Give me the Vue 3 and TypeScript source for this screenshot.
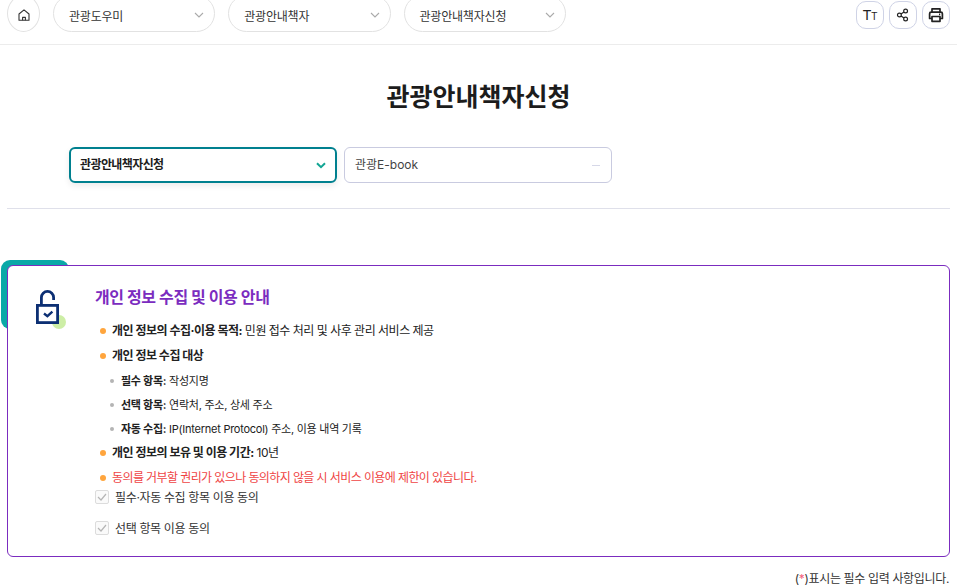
<script setup lang="ts">
interface Row { lead?: string; text?: string; sub?: boolean; warn?: boolean }
const pills: string[] = ['관광도우미', '관광안내책자', '관광안내책자신청']
const rows: Row[] = [
  { lead: '개인 정보의 수집·이용 목적:', text: ' 민원 접수 처리 및 사후 관리 서비스 제공' },
  { lead: '개인 정보 수집 대상' },
  { lead: '필수 항목:', text: ' 작성지명', sub: true },
  { lead: '선택 항목:', text: ' 연락처, 주소, 상세 주소', sub: true },
  { lead: '자동 수집:', text: ' IP(Internet Protocol) 주소, 이용 내역 기록', sub: true },
  { lead: '개인 정보의 보유 및 이용 기간:', text: ' 10년' },
  { text: '동의를 거부할 권리가 있으나 동의하지 않을 시 서비스 이용에 제한이 있습니다.', warn: true },
]
const checks: string[] = ['필수·자동 수집 항목 이용 동의', '선택 항목 이용 동의']
</script>

<template>
  <div class="page">
    <header class="topbar">
      <div class="crumbs">
        <button class="home" aria-label="홈">
          <svg width="14" height="14" viewBox="0 0 14 14" fill="none" stroke="#333" stroke-width="1.1" stroke-linejoin="round">
            <path d="M2 6 7 1.8 12 6v6.2H2z" />
            <path d="M5.6 12.2V9.4h2.8v2.8" />
          </svg>
        </button>
        <div v-for="p in pills" :key="p" class="pill">
          <span>{{ p }}</span>
          <svg width="10" height="6" viewBox="0 0 10 6" fill="none" stroke="#aaa" stroke-width="1.1"><path d="M1 1l4 4 4-4" /></svg>
        </div>
      </div>
      <div class="tools">
        <button class="tool" aria-label="글자 크기">
          <span class="tt-big">T</span><span class="tt-small">T</span>
        </button>
        <button class="tool" aria-label="공유">
          <svg width="14" height="14" viewBox="0 0 14 14" fill="none" stroke="#222" stroke-width="1.2">
            <circle cx="9.6" cy="3" r="1.9" /><circle cx="3.4" cy="7" r="1.9" /><circle cx="9.6" cy="11" r="1.9" />
            <path d="M5 6 8 4M5 8l3 2" />
          </svg>
        </button>
        <button class="tool" aria-label="인쇄">
          <svg width="16" height="16" viewBox="0 0 16 16" fill="none" stroke="#222" stroke-width="1.7" stroke-linejoin="round">
            <path d="M4 5V1.8h8V5" />
            <path d="M4 11.5H1.6V6.8A1.6 1.6 0 0 1 3.2 5.2h9.6a1.6 1.6 0 0 1 1.6 1.6v4.7H12" />
            <path d="M4 9.5h8v4.8H4z" />
            <path d="M11 7.4h1.2" />
          </svg>
        </button>
      </div>
    </header>

    <h1 class="title">관광안내책자신청</h1>

    <div class="selects">
      <div class="select active">
        <span>관광안내책자신청</span>
        <svg class="nudge" width="10" height="7" viewBox="0 0 10 7" fill="none" stroke="#12a594" stroke-width="2"><path d="M1 1.2l4 4 4-4" /></svg>
      </div>
      <div class="select">
        <span>관광E-book</span>
        <i class="dash nudge"></i>
      </div>
    </div>

    <hr class="rule" />

    <section class="card-wrap">
      <div class="tab"></div>
      <div class="card">
        <div class="icon">
          <i class="dot"></i>
          <svg width="26" height="36" viewBox="0 0 26 36" fill="none" stroke="#0c2f73" stroke-width="2.8">
            <path d="M6.4 14V7.5a6.1 6.1 0 0 1 12.2 0v2.5" />
            <rect x="2.4" y="15.4" width="20.2" height="17.2" fill="#fff" />
            <path d="M9 23.5l3.4 2.6 5-4.5" stroke-width="2.4" />
          </svg>
        </div>
        <div class="body">
          <h2 class="heading">개인 정보 수집 및 이용 안내</h2>
          <ul class="list">
            <li v-for="(r, i) in rows" :key="i" class="row" :class="{ sub: r.sub, warn: r.warn }">
              <b v-if="r.lead">{{ r.lead }}</b><span v-if="r.text">{{ r.text }}</span>
            </li>
          </ul>
          <label v-for="c in checks" :key="c" class="check">
            <span class="box">
              <svg width="10" height="8" viewBox="0 0 10 8" fill="none" stroke="#b5b5b5" stroke-width="1.2"><path d="M1 4l3 3 5-6" /></svg>
            </span>
            <span>{{ c }}</span>
          </label>
        </div>
      </div>
    </section>

    <p class="note">(<em>*</em>)표시는 필수 입력 사항입니다.</p>
  </div>
</template>

<style>
html, body { margin: 0; overflow: hidden; background: #fff; }
</style>

<style scoped>
.page {
  width: 957px;
  height: 586px;
  overflow: hidden;
  font-family: "Inter", "Noto Sans CJK KR", sans-serif;
  color: #222;
  font-size: 12px;
}
.topbar {
  height: 45px;
  box-sizing: border-box;
  border-bottom: 1px solid #ececec;
  display: flex;
  justify-content: space-between;
  padding: 0 7px;
}
.crumbs { display: flex; gap: 13px; margin-top: -5px; height: 37px; }
.home {
  width: 33px;
  height: 37px;
  box-sizing: border-box;
  border: 1px solid #e2e2e2;
  border-radius: 50%;
  background: #fff;
  padding: 3px 0 0;
  display: flex;
  align-items: center;
  justify-content: center;
}
.pill {
  width: 162.25px;
  box-sizing: border-box;
  height: 37px;
  border: 1px solid #e2e2e2;
  border-radius: 19px;
  padding: 3px 10px 0 15px;
  display: flex;
  align-items: center;
  justify-content: space-between;
  color: #333;
  font-size: 12px;
  letter-spacing: -0.2px;
}
.tools { display: flex; gap: 5px; margin-top: 1px; height: 28px; }
.tool {
  width: 28px;
  height: 28px;
  box-sizing: border-box;
  border: 1px solid #cfd3e6;
  border-radius: 10px;
  background: #fff;
  padding: 0;
  display: flex;
  align-items: center;
  justify-content: center;
  font-family: "Liberation Sans", sans-serif;
  color: #222;
}
.tt-big { font-size: 14px; }
.tt-small { font-size: 10px; margin-top: 2px; }
.title {
  margin: 34px 0 0;
  text-align: center;
  font-size: 25px;
  line-height: 36px;
  font-weight: 700;
  color: #1c1c1c;
}
.selects { display: flex; gap: 7px; margin: 32px 0 0 69px; }
.select {
  width: 268px;
  height: 36px;
  box-sizing: border-box;
  border: 1px solid #c9cbe0;
  border-radius: 6px;
  padding: 0 11px 3px 10px;
  display: flex;
  align-items: center;
  justify-content: space-between;
  font-size: 12px;
  color: #444;
}
.select.active {
  border: 2px solid #00808f;
  padding: 0 9px 3px 9px;
  color: #1c1c1c;
  font-weight: 700;
  letter-spacing: -0.6px;
  box-shadow: 0 3px 6px rgba(0, 0, 0, 0.08);
}
.nudge { margin-top: 3px; }
.dash { width: 8px; height: 1px; background: #d6d8e8; }
.rule { margin: 25px 7px 0; border: 0; border-top: 1px solid #dfe0ea; }
.card-wrap { position: relative; margin: 51px 7px 0; padding-top: 5px; }
.tab {
  position: absolute;
  left: -6px;
  top: 0;
  width: 68px;
  height: 69px;
  border-radius: 9px;
  background: #0aa8a7;
}
.card {
  position: relative;
  height: 292px;
  box-sizing: border-box;
  border: 1px solid #7b2cbf;
  border-radius: 6px;
  background: #fff;
  display: flex;
}
.icon { position: relative; width: 87px; padding: 24px 0 0 27px; box-sizing: border-box; }
.dot {
  position: absolute;
  left: 44px;
  top: 49px;
  width: 14px;
  height: 14px;
  border-radius: 50%;
  background: #cdeea6;
}
.icon svg { position: relative; display: block; }
.body { flex: 1; padding-top: 20px; }
.heading {
  margin: 0 0 11px;
  font-size: 16px;
  line-height: 22px;
  font-weight: 700;
  color: #7b2cbf;
  letter-spacing: -0.4px;
}
.list { margin: 0; padding: 0; list-style: none; }
.row {
  position: relative;
  height: 25px;
  line-height: 24px;
  padding-left: 17px;
  font-size: 12px;
  letter-spacing: -0.5px;
}
.row::before {
  content: "";
  position: absolute;
  left: 5px;
  top: 9px;
  width: 6px;
  height: 6px;
  border-radius: 50%;
  background: #ffa53d;
}
.row b { font-weight: 700; }
.row.sub { height: 24px; padding-left: 26px; font-size: 11px; letter-spacing: -0.25px; }
.row.sub::before { left: 15px; top: 10px; width: 4px; height: 4px; background: #b4b4b4; }
.row.warn { color: #ef4444; height: 20px; letter-spacing: -0.6px; }
.check {
  display: flex;
  align-items: center;
  gap: 6px;
  height: 31px;
  margin-top: -5px;
  margin-bottom: 5px;
  font-size: 12px;
  letter-spacing: -0.35px;
  color: #333;
}
.box {
  width: 12px;
  height: 12px;
  border: 1px solid #dcdcdc;
  border-radius: 2px;
  display: flex;
  align-items: center;
  justify-content: center;
  background: #fafafa;
}
.note {
  margin: 14px 8px 0 0;
  text-align: right;
  font-size: 12px;
  line-height: 16px;
  letter-spacing: -0.35px;
  color: #333;
}
.note em { font-style: normal; color: #f4617c; }
</style>
